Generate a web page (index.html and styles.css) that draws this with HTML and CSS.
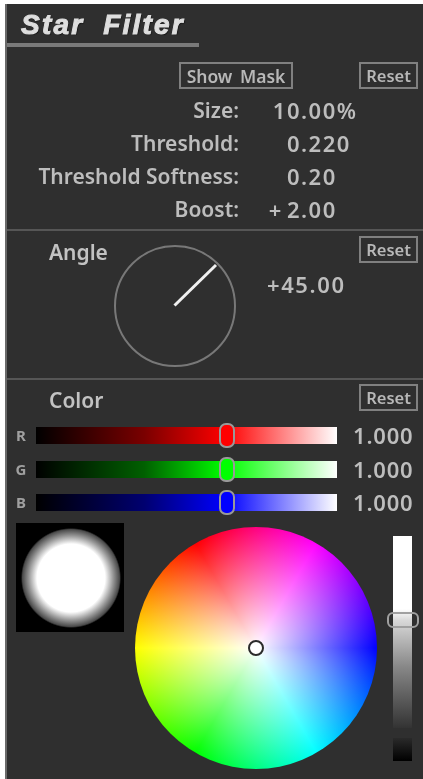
FILE: index.html
```html
<!DOCTYPE html>
<html lang="en">
<head>
<meta charset="utf-8">
<title>Star Filter</title>
<link rel="stylesheet" href="styles.css">
</head>
<body>
<main class="panel">
  <header class="title-bar"><h1 class="title">Star Filter</h1></header>

  <section class="params">
    <div class="params-actions">
      <button class="btn btn-mask" type="button">Show Mask</button>
      <button class="btn" type="button">Reset</button>
    </div>
    <dl class="param-grid">
      <dt>Size:</dt><dd class="int">10</dd><dd class="frac">.00<span class="unit">%</span></dd>
      <dt>Threshold:</dt><dd class="int">0</dd><dd class="frac">.220</dd>
      <dt>Threshold Softness:</dt><dd class="int">0</dd><dd class="frac">.20</dd>
      <dt>Boost:</dt><dd class="int"><span class="sign">+</span>2</dd><dd class="frac">.00</dd>
    </dl>
  </section>

  <section class="angle">
    <h2 class="heading angle-label">Angle</h2>
    <svg class="dial" width="122" height="122" viewBox="0 0 122 122" aria-hidden="true">
      <circle cx="61" cy="61" r="60" fill="none" stroke="#787878" stroke-width="2"/>
      <line x1="60.5" y1="60.5" x2="102" y2="20" stroke="#f0f0f0" stroke-width="3"/>
    </svg>
    <div class="value angle-value">+45.00</div>
    <button class="btn angle-reset" type="button">Reset</button>
  </section>

  <section class="color">
    <div class="color-head">
      <h2 class="heading color-label">Color</h2>
      <button class="btn" type="button">Reset</button>
    </div>
    <div class="channels">
      <span class="ch-name">R</span>
      <div class="track track-r"><span class="thumb"></span></div>
      <span class="value ch-value">1.000</span>
      <span class="ch-name">G</span>
      <div class="track track-g"><span class="thumb"></span></div>
      <span class="value ch-value">1.000</span>
      <span class="ch-name">B</span>
      <div class="track track-b"><span class="thumb"></span></div>
      <span class="value ch-value">1.000</span>
    </div>
    <div class="pickers">
      <div class="preview"></div>
      <div class="wheel"><span class="marker"></span></div>
      <div class="lum">
        <div class="lum-track"><span class="lum-thumb"></span></div>
        <div class="lum-black"></div>
      </div>
    </div>
  </section>
</main>
</body>
</html>
```

FILE: styles.css
```css
* { box-sizing: border-box; }
html, body { margin: 0; padding: 0; background: #fff; }
body { height: 779px; overflow: hidden; }

.panel {
  margin: 4px 0 0 5px;
  height: 775px;
  background: #2f2f2f;
  border-left: 2px solid #6a6a6a;
  color: #bdbdbd;
  font-family: "Noto Sans", sans-serif;
  filter: blur(0.5px);
  overflow: hidden;
}

.title-bar {
  width: 192px;
  height: 43px;
  border-bottom: 4px solid #7a7a7a;
  padding: 6px 0 0 14px;
}
.title {
  margin: 0;
  font: italic bold 28px/30px "Liberation Sans", sans-serif;
  letter-spacing: 2.2px;
  word-spacing: 9px;
  color: #dedede;
  -webkit-text-stroke: 1px #dedede;
  text-shadow: 1px 1px 1px #111;
  white-space: nowrap;
}

.btn {
  display: block;
  height: 27px;
  margin: 0;
  padding: 0;
  width: 59px;
  background: transparent;
  border: 2px solid #808080;
  color: #b8b8b8;
  font: 600 16.5px/22px "Noto Sans", sans-serif;
}
.btn-mask { width: 114px; margin-right: 66px; font-size: 17.5px; word-spacing: 3px; }

.params { height: 184px; border-bottom: 2px solid #565656; padding-top: 15px; }
.params-actions { display: flex; justify-content: flex-end; padding-right: 5px; }
.param-grid {
  display: grid;
  grid-template-columns: 232px 62px auto;
  grid-auto-rows: 33.2px;
  margin: 4px 0 0;
  align-items: center;
}
.param-grid dt { text-align: right; white-space: nowrap; font-size: 21px; font-weight: 600; }
.param-grid dd { margin: 0; font-size: 22px; font-weight: 600; letter-spacing: 1.5px; }
.int { text-align: right; }
.sign { margin-right: 4px; }
.unit { letter-spacing: 0; font-size: 22px; }

.heading { margin: 0; font-size: 21px; line-height: 26px; font-weight: 600; color: #c2c2c2; }
.value { font-size: 22px; font-weight: 600; line-height: 26px; letter-spacing: 1.6px; white-space: nowrap; }

.angle { display: flex; align-items: flex-start; height: 149px; border-bottom: 2px solid #565656; }
.angle-label { margin: 8px 0 0 42px; width: 65px; }
.dial { display: block; margin-top: 14px; flex: none; }
.angle-value { margin: 40px 0 0 31px; }
.angle-reset { margin: 5px 5px 0 auto; }

.color { padding-top: 3px; }
.color-head { display: flex; justify-content: space-between; align-items: flex-start; padding: 1px 5px 0 42px; }
.color-label { margin-top: 3px; }

.channels {
  display: grid;
  grid-template-columns: 29px 301px auto;
  grid-auto-rows: 17px;
  row-gap: 16.5px;
  align-items: center;
  margin-top: 14px;
}
.ch-name { font-size: 15px; line-height: 17px; font-weight: 700; color: #a0a0a0; text-align: center; padding-right: 1px; }
.ch-value { margin-left: 16px; line-height: 17px; letter-spacing: 0.8px; }

.track { position: relative; height: 17px; }
.track-r { background: linear-gradient(to right, #000, #7a0000 36%, #f00 63%, #fff 100%); }
.track-g { background: linear-gradient(to right, #000, #006000 36%, #0f0 63%, #fff 100%); }
.track-b { background: linear-gradient(to right, #000, #000070 36%, #00f 63%, #fff 100%); }
.thumb {
  position: absolute;
  left: 183px;
  top: -4px;
  width: 16px;
  height: 25px;
  border: 2px solid #999;
  border-radius: 7px;
}
.track-r .thumb { background: #f00; }
.track-g .thumb { background: #0f0; }
.track-b .thumb { background: #00f; }

.pickers { display: flex; align-items: flex-start; margin-top: 12px; padding-left: 9px; }
.preview {
  flex: none;
  width: 108px;
  height: 109px;
  background: radial-gradient(circle at 55px 55px, #fff 34px, #999 42px, #4a4a4a 48.5px, #000 50px);
}
.wheel {
  position: relative;
  flex: none;
  width: 242px;
  height: 242px;
  margin: 4px 0 0 11px;
  border-radius: 50%;
  background:
    radial-gradient(circle closest-side, #fff 0, rgba(255,255,255,0) 100%),
    conic-gradient(from 330deg, #f00, #f0f 16.67%, #00f 33.33%, #0ff 50%, #0f0 66.67%, #ff0 83.33%, #f00);
}
.marker {
  position: absolute;
  left: 113px;
  top: 113px;
  width: 16px;
  height: 16px;
  border: 2.5px solid #2b2b2b;
  border-radius: 50%;
  background: #fff;
}
.lum { flex: none; width: 19px; margin: 13px 0 0 16px; }
.lum-track {
  position: relative;
  height: 192px;
  background: linear-gradient(to bottom, #fff 0, #fff 38%, #d8d8d8 44%, #888 68%, #333 100%);
}
.lum-thumb {
  position: absolute;
  left: -6px;
  top: 76px;
  width: 32px;
  height: 16px;
  border: 2px solid #a0a0a0;
  border-radius: 6px;
}
.lum-black { height: 23px; margin-top: 10px; background: linear-gradient(to bottom, #2a2a2a, #000); }
```
